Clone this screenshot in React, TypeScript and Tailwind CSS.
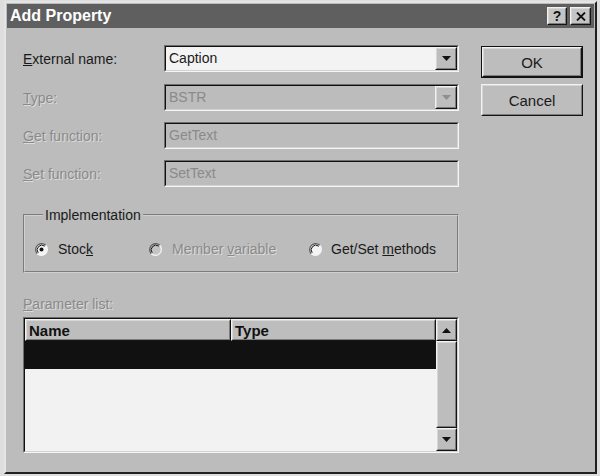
import React from "react";

const sans = "font-['Liberation_Sans',Arial,sans-serif]";

function Sunken({ className = "", inner = "", children }: { className?: string; inner?: string; children?: React.ReactNode }) {
  return (
    <div className={`border border-t-[#6e6e6e] border-l-[#6e6e6e] border-b-[#f6f6f6] border-r-[#f6f6f6] ${className}`}>
      <div className={`h-full w-full border border-t-[#111] border-l-[#111] border-b-[#d2d2d2] border-r-[#d2d2d2] ${inner}`}>
        {children}
      </div>
    </div>
  );
}

function Raised({ className = "", inner = "", children }: { className?: string; inner?: string; children?: React.ReactNode }) {
  return (
    <div className={`border border-t-[#f2f2f2] border-l-[#f2f2f2] border-b-[#141414] border-r-[#141414] bg-[#bdbdbd] ${className}`}>
      <div className={`h-full w-full border border-t-[#d6d6d6] border-l-[#d6d6d6] border-b-[#7c7c7c] border-r-[#7c7c7c] ${inner}`}>
        {children}
      </div>
    </div>
  );
}

function Arrow({ dir, color }: { dir: "up" | "down"; color: string }) {
  return (
    <svg width="9" height="5" viewBox="0 0 9 5">
      {dir === "down" ? <path d="M0 0H9L4.5 5Z" fill={color} /> : <path d="M0 5H9L4.5 0Z" fill={color} />}
    </svg>
  );
}

function Radio({ checked, disabled }: { checked?: boolean; disabled?: boolean }) {
  return (
    <svg width="13" height="13" viewBox="0 0 13 13" className="shrink-0">
      <circle cx="6.5" cy="6.5" r="5.5" fill={disabled ? "#c4c4c4" : "#f4f4f4"} />
      <path d="M2.26 10.74A6 6 0 0 1 10.74 2.26" stroke="#5a5a5a" strokeWidth="1.2" fill="none" />
      <path d="M3.2 9.8A4.7 4.7 0 0 1 9.8 3.2" stroke="#111" strokeWidth="1" fill="none" />
      <path d="M10.74 2.26A6 6 0 0 1 2.26 10.74" stroke="#f8f8f8" strokeWidth="1.2" fill="none" />
      {checked && <circle cx="6.5" cy="6.5" r="2" fill="#111" />}
    </svg>
  );
}

function Label({ children, disabled }: { children: React.ReactNode; disabled?: boolean }) {
  return (
    <div
      className={`w-[141px] text-[14px] leading-none ${
        disabled ? "text-[#8a8a8a] [text-shadow:1px_1px_0_#dcdcdc]" : "text-[#1a1a1a]"
      }`}
    >
      {children}
    </div>
  );
}

function Combo({ value, disabled }: { value: string; disabled?: boolean }) {
  return (
    <Sunken className="w-[295px] h-[27px]" inner={`flex ${disabled ? "bg-[#bcbcbc]" : "bg-[#f3f3f3]"}`}>
      <div
        className={`flex-1 flex items-center pl-[3px] text-[14px] ${
          disabled ? "text-[#8a8a8a]" : "text-[#1a1a1a]"
        }`}
      >
        {value}
      </div>
      <Raised className="w-[22px] h-full" inner="flex items-center justify-center">
        <Arrow dir="down" color={disabled ? "#8e8e8e" : "#111"} />
      </Raised>
    </Sunken>
  );
}

function Field({ value }: { value: string }) {
  return (
    <Sunken className="w-[295px] h-[27px]" inner="flex items-center pl-[3px] bg-[#bcbcbc]">
      <span className="text-[14px] text-[#8a8a8a]">{value}</span>
    </Sunken>
  );
}

export default function App() {
  return (
    <div className={`w-[600px] h-[476px] bg-[#dedede] pl-[4px] pt-[1px] pr-[3px] pb-[2px] ${sans}`}>
      <div className="h-full flex flex-col bg-[#bcbcbc] border-t-2 border-l-2 border-t-[#e4e4e4] border-l-[#e4e4e4] border-b-2 border-r-2 border-b-[#202020] border-r-[#202020] p-[1px]">
        {/* Title bar */}
        <div className="h-[24px] shrink-0 flex items-center bg-[#5f5f5f] pl-[3px] pr-[3px]">
          <span className="flex-1 text-white font-bold text-[16px] leading-none">Add Property</span>
          <div className="flex gap-[3px]">
            <Raised className="w-[20px] h-[18px]" inner="flex items-center justify-center bg-[#c4c4c4]">
              <span className="text-[14px] font-bold leading-none text-[#111]">?</span>
            </Raised>
            <Raised className="w-[21px] h-[18px]" inner="flex items-center justify-center bg-[#c4c4c4]">
              <svg width="10" height="9" viewBox="0 0 10 9">
                <path d="M1 0.5L9 8.5M9 0.5L1 8.5" stroke="#111" strokeWidth="1.8" />
              </svg>
            </Raised>
          </div>
        </div>

        {/* Body */}
        <div className="flex-1 flex pl-[16px] pt-[17px]">
          <div className="w-[436px] flex flex-col">
            <div className="flex items-center">
              <Label>
                <u>E</u>xternal name:
              </Label>
              <Combo value="Caption" />
            </div>
            <div className="flex items-center mt-[12px]">
              <Label disabled>
                <u>T</u>ype:
              </Label>
              <Combo value="BSTR" disabled />
            </div>
            <div className="flex items-center mt-[11px]">
              <Label disabled>
                <u>G</u>et function:
              </Label>
              <Field value="GetText" />
            </div>
            <div className="flex items-center mt-[11px]">
              <Label disabled>
                <u>S</u>et function:
              </Label>
              <Field value="SetText" />
            </div>

            {/* Implementation group */}
            <fieldset className="mt-[20px] w-[436px] border-2 [border-style:groove] border-[#d0d0d0] pl-[10px] pb-[12px]">
              <legend className="ml-[8px] px-[2px] text-[14px] leading-[16px] text-[#1a1a1a]">Implementation</legend>
              <div className="flex items-center h-[20px] mt-[16px] text-[14px]">
                <div className="w-[114px] flex items-center gap-[10px] text-[#1a1a1a]">
                  <Radio checked />
                  <span>
                    Stoc<u>k</u>
                  </span>
                </div>
                <div className="w-[160px] flex items-center gap-[10px] text-[#8a8a8a] [text-shadow:1px_1px_0_#dcdcdc]">
                  <Radio disabled />
                  <span>
                    Member <u>v</u>ariable
                  </span>
                </div>
                <div className="flex items-center gap-[9px] text-[#1a1a1a]">
                  <Radio />
                  <span>
                    Get/Set <u>m</u>ethods
                  </span>
                </div>
              </div>
            </fieldset>

            <div className="mt-[23px] text-[14px] leading-[16px] text-[#8a8a8a] [text-shadow:1px_1px_0_#dcdcdc]">
              <u>P</u>arameter list:
            </div>

            {/* Parameter list */}
            <Sunken className="mt-[5px] w-[436px] h-[136px]" inner="flex">
              <div className="flex-1 flex flex-col">
                <div className="h-[22px] flex">
                  <Raised className="w-[206px] h-full" inner="flex items-center pl-[2px]">
                    <span className="text-[15px] font-bold text-[#111] leading-none">Name</span>
                  </Raised>
                  <Raised className="flex-1 h-full" inner="flex items-center pl-[2px]">
                    <span className="text-[15px] font-bold text-[#111] leading-none">Type</span>
                  </Raised>
                </div>
                <div className="h-[28px] bg-[#111]" />
                <div className="flex-1 bg-[#f2f2f2]" />
              </div>
              <div className="w-[21px] flex flex-col">
                <Raised className="h-[22px]" inner="flex items-center justify-center">
                  <Arrow dir="up" color="#111" />
                </Raised>
                <Raised className="flex-1" />
                <Raised className="h-[23px]" inner="flex items-center justify-center">
                  <Arrow dir="down" color="#111" />
                </Raised>
              </div>
            </Sunken>
          </div>

          {/* Buttons */}
          <div className="ml-[22px] w-[102px] flex flex-col gap-[6px] pt-[1px]">
            <div className="h-[32px] border border-[#111]">
              <Raised className="h-full" inner="flex items-center justify-center">
                <span className="text-[15px] text-[#1a1a1a] leading-none">OK</span>
              </Raised>
            </div>
            <Raised className="h-[32px]" inner="flex items-center justify-center">
              <span className="text-[15px] text-[#1a1a1a] leading-none">Cancel</span>
            </Raised>
          </div>
        </div>
      </div>
    </div>
  );
}
